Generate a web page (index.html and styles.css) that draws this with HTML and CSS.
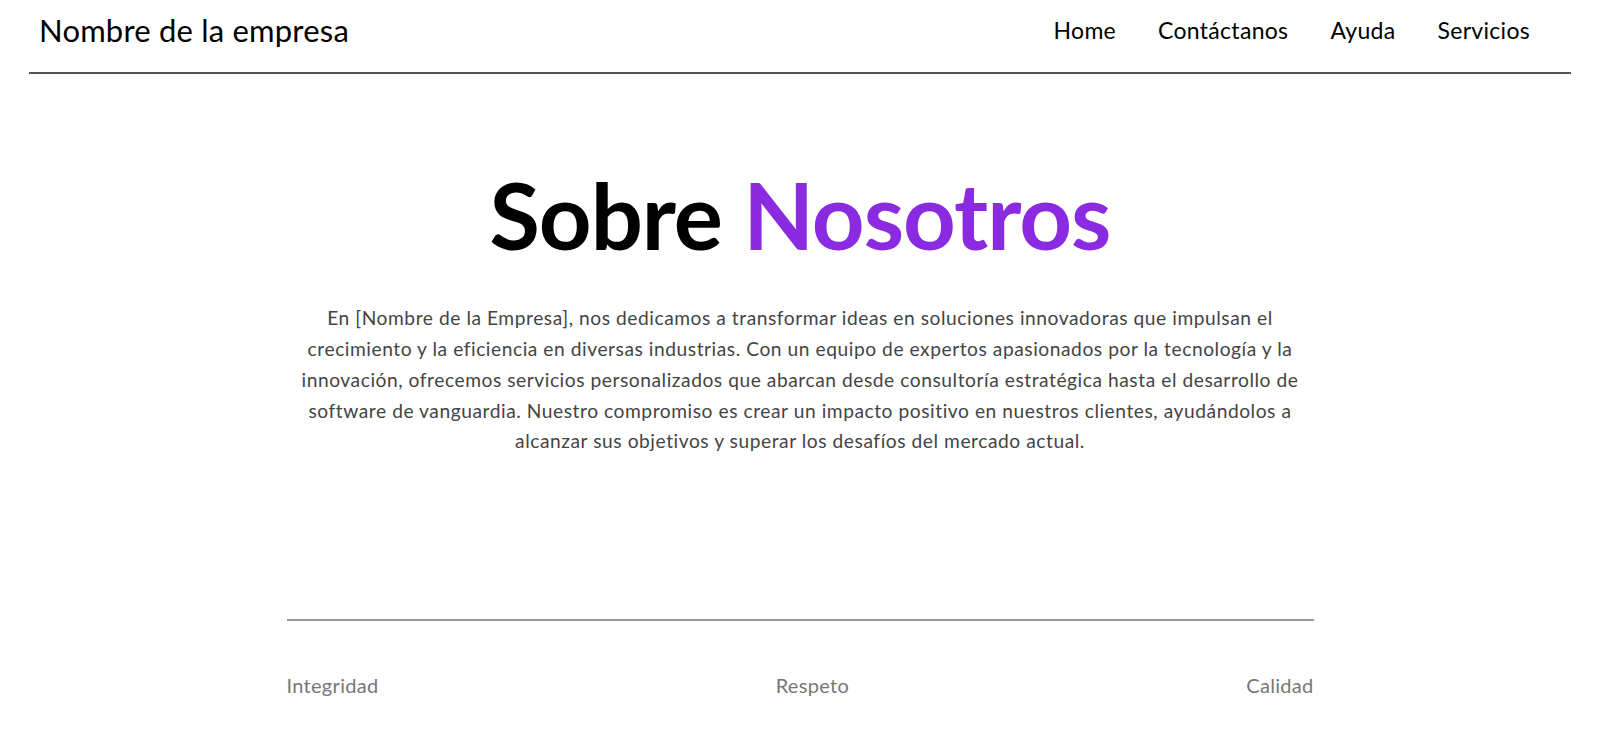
FILE: index.html
```html
<!DOCTYPE html>
<html lang="es">
<head>
<meta charset="utf-8">
<title>Sobre Nosotros</title>
<link rel="stylesheet" href="styles.css">
</head>
<body>
<header class="site-header">
  <div class="brand">Nombre de la empresa</div>
  <nav class="nav">
    <a href="#">Home</a>
    <a href="#">Contáctanos</a>
    <a href="#">Ayuda</a>
    <a href="#">Servicios</a>
  </nav>
</header>
<main class="about">
  <h1 class="title">Sobre <span class="accent">Nosotros</span></h1>
  <p class="lead">En [Nombre de la Empresa], nos dedicamos a transformar ideas en soluciones innovadoras que impulsan el crecimiento y la eficiencia en diversas industrias. Con un equipo de expertos apasionados por la tecnología y la innovación, ofrecemos servicios personalizados que abarcan desde consultoría estratégica hasta el desarrollo de software de vanguardia. Nuestro compromiso es crear un impacto positivo en nuestros clientes, ayudándolos a alcanzar sus objetivos y superar los desafíos del mercado actual.</p>
  <section class="values">
    <span>Integridad</span>
    <span>Respeto</span>
    <span>Calidad</span>
  </section>
</main>
</body>
</html>
```
FILE: styles.css
```css
* { box-sizing: border-box; }
html, body { margin: 0; padding: 0; background: #fff; }
body {
  font-family: "Lato", "Noto Sans", sans-serif;
  color: #000;
}
.site-header {
  margin: 0 29px;
  height: 74px;
  padding: 0 41px 12px 10px;
  display: flex;
  align-items: center;
  justify-content: space-between;
  border-bottom: 2px solid #555;
}
.brand {
  font-size: 31px;
  font-weight: 400;
  letter-spacing: 0.2px;
}
.nav {
  display: flex;
  gap: 42px;
}
.nav a {
  color: #000;
  text-decoration: none;
  font-size: 23px;
  letter-spacing: 0.3px;
}
.about {
  display: flex;
  flex-direction: column;
  align-items: center;
}
.title {
  margin: 86px 0 0;
  font-size: 92px;
  font-weight: 700;
  line-height: 1.2;
  letter-spacing: -1px;
}
.accent { color: #8a2be2; }
.lead {
  width: 1030px;
  margin: 33px 0 0;
  text-align: center;
  font-size: 19.2px;
  line-height: 1.6;
  letter-spacing: 0.55px;
  color: #444;
}
.values {
  width: 1027px;
  margin-top: 162px;
  border-top: 2px solid #999;
  padding-top: 52px;
  display: flex;
  justify-content: space-between;
  font-size: 20px;
  letter-spacing: 0.3px;
  color: #777;
}
```
